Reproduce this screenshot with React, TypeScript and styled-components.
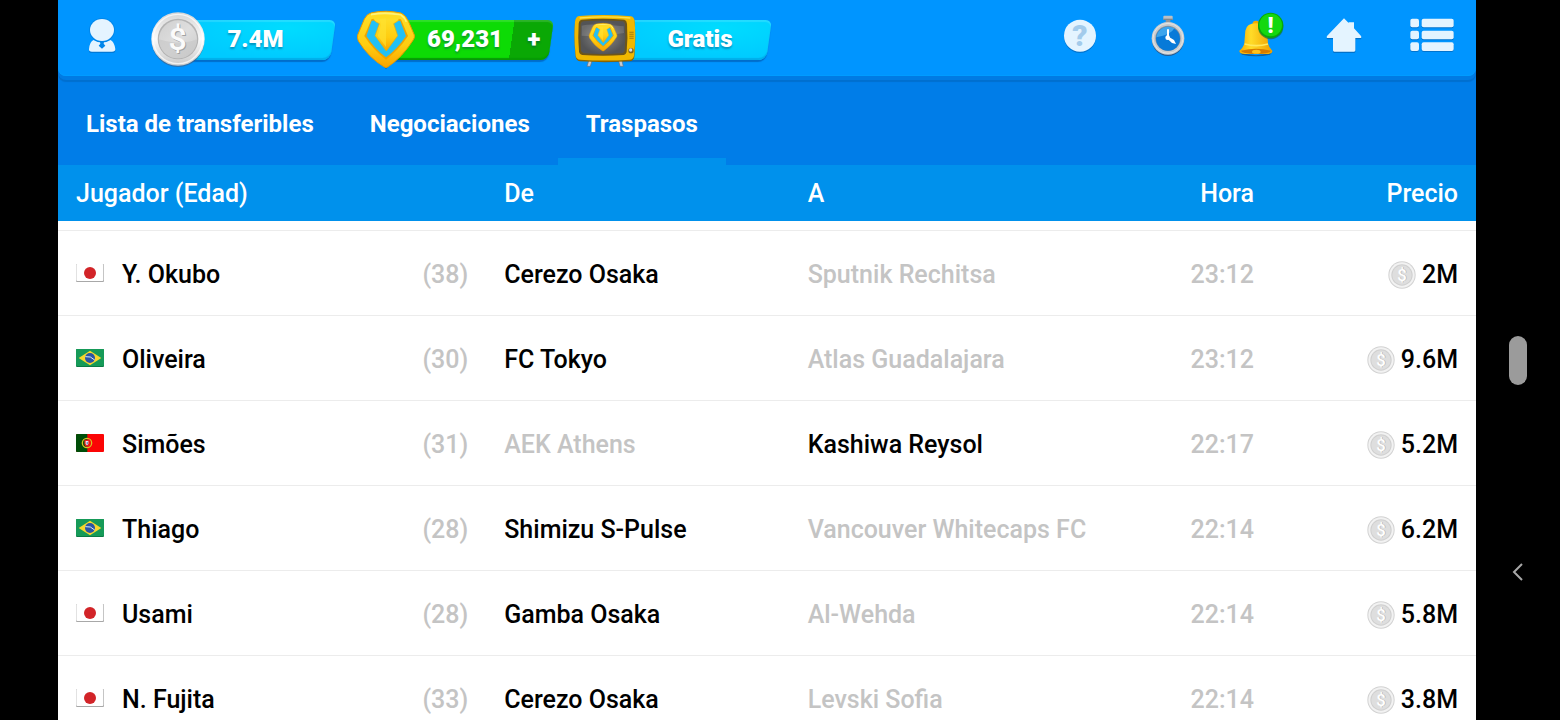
import React from "react";
import styled, { createGlobalStyle } from "styled-components";

const GlobalStyle = createGlobalStyle`
  *, *::before, *::after { box-sizing: border-box; }
  body {
    margin: 0;
    background: #000;
    font-family: Roboto, "Liberation Sans", sans-serif;
  }
  button {
    margin: 0;
    padding: 0;
    border: 0;
    background: none;
    color: inherit;
    font: inherit;
    cursor: pointer;
  }
  svg { display: block; flex: none; }
`;

const Device = styled.div`
  display: grid;
  grid-template-columns: 58px minmax(0, 1fr) 84px;
  height: 100vh;
  overflow: hidden;
  background: #000;
`;

const Screen = styled.div`
  grid-column: 2;
  display: flex;
  flex-direction: column;
  min-height: 0;
  overflow: hidden;
  background: #fff;
`;

const HeaderBack = styled.div`
  flex: none;
  background: #007de8;
`;

const Header = styled.header`
  display: flex;
  justify-content: space-between;
  height: 76px;
  border-radius: 0 0 8px 8px;
  background: #0095ff;
  box-shadow: inset 0 -1px 0 #009cff, 0 4px 0 #007be3, 0 6px 1px #006fcf;
`;

const HeaderGroup = styled.div`
  display: flex;
`;

const IconButton = styled.button`
  display: flex;
  align-items: center;
  justify-content: center;
  width: 88px;
  height: 72px;
`;

const Resources = styled.div`
  display: flex;
  gap: 20px;
  padding: 20px 3px 16px;
`;

const Resource = styled.button<{ $width: number }>`
  display: flex;
  align-items: center;
  width: ${(p) => p.$width}px;
  height: 40px;
`;

const ResourceIcon = styled.span`
  position: relative;
  z-index: 1;
  margin-right: -32px;
`;

const Pill = styled.span<{ $tone: "cyan" | "green"; $inset: number }>`
  position: relative;
  display: flex;
  flex: 1;
  align-items: center;
  height: 40px;
  padding-left: ${(p) => p.$inset}px;
  color: #fff;
  font-size: 24px;
  font-weight: 900;
  line-height: 38px;
  text-shadow: 0 2px 2px rgba(0, 60, 100, 0.4);

  &::before {
    content: "";
    position: absolute;
    inset: 0 3px 0 3px;
    border-radius: 5px 6px 8px 5px;
    transform: skewX(-8deg);
    background: ${(p) =>
      p.$tone === "cyan"
        ? "radial-gradient(ellipse at 70% 20%, #00dcff, #00caff 70%)"
        : "linear-gradient(90deg, #0ddb05 0 76%, #0aa805 76%)"};
    box-shadow: inset 0 2px 1px rgba(255, 255, 255, 0.14),
      inset 0 -2px 1px ${(p) => (p.$tone === "cyan" ? "#00aeea" : "#079a06")},
      0 2px 1px rgba(0, 60, 140, 0.45);
  }
`;

const Amount = styled.span`
  position: relative;
  flex: 1;
  height: 40px;
  text-align: center;
`;

const Plus = styled.span`
  position: relative;
  width: 40px;
  height: 40px;
  text-align: center;
`;

const Tabs = styled.nav`
  display: flex;
  padding-top: 6px;
`;

const Tab = styled.button<{ $active?: boolean }>`
  height: 83px;
  padding: 8px 28px 0;
  border-bottom: 7px solid ${(p) => (p.$active ? "#0091ec" : "transparent")};
  color: #fff;
  font-size: 24px;
  font-weight: 700;
  line-height: 32px;
  white-space: nowrap;
`;

const Table = styled.table`
  width: 100%;
  border-collapse: separate;
  border-spacing: 0;
  table-layout: fixed;
  font-size: 25px;
  font-weight: 500;
  line-height: 32px;
`;

const Col = styled.col<{ $width?: string }>`
  width: ${(p) => p.$width ?? "auto"};
`;

const HeadCell = styled.th<{ $end?: boolean }>`
  height: 56px;
  padding: 2px 18px 0;
  background: #0091ec;
  color: #fff;
  font-weight: 500;
  text-align: ${(p) => (p.$end ? "right" : "left")};
`;

const ScrolledCell = styled.td`
  height: 10px;
  padding: 0;
  border-bottom: 1px solid #ececec;
`;

const Cell = styled.td<{ $muted?: boolean; $end?: boolean }>`
  height: 85px;
  padding: 4px 18px 0;
  border-bottom: 1px solid #ececec;
  color: ${(p) => (p.$muted ? "#c4c4c4" : "#000")};
  text-align: ${(p) => (p.$end ? "right" : "left")};
  white-space: nowrap;
`;

const Player = styled.div`
  display: flex;
  align-items: center;
  gap: 18px;
`;

const FlagBox = styled.span`
  padding-bottom: 4px;
`;

const Age = styled.span`
  margin-left: auto;
  color: #c4c4c4;
`;

const Price = styled.div`
  display: flex;
  align-items: center;
  justify-content: flex-end;
  gap: 6px;
`;

const SystemBar = styled.aside`
  grid-column: 3;
  display: grid;
  grid-template-rows: 1fr 49px 1fr;
  justify-items: center;
`;

const HomeHandle = styled.button`
  grid-row: 2;
  width: 18px;
  border-radius: 9px;
  background: #9b9b9b;
`;

const BackButton = styled.button`
  grid-row: 3;
  display: flex;
  align-items: center;
  justify-content: center;
  width: 48px;
  padding-top: 40px;
`;

function PersonIcon() {
  return (
    <svg width="32" height="38" viewBox="84 48 96 114" aria-hidden="true">
      <g transform="translate(0 4)" fill="#0067bd" opacity=".6">
        <ellipse cx="132" cy="87" rx="36" ry="32" />
        <path d="M106 117Q132 132 158 117Q170 124 172 145Q172 152 162 152H102Q92 152 93 145Q94 124 106 117Z" />
      </g>
      <g fill="#e5f4ff">
        <path d="M106 117Q132 132 158 117Q170 124 172 145Q172 152 162 152H102Q92 152 93 145Q94 124 106 117Z" />
        <ellipse cx="132" cy="87" rx="39" ry="36" fill="#0086ea" />
        <ellipse cx="132" cy="87" rx="36" ry="33" />
      </g>
      <path d="M126 122h12l-1 6 5 6-10 9-10-9 5-6z" fill="#0086ea" />
    </svg>
  );
}

function CoinIcon() {
  return (
    <svg width="58" height="58" viewBox="273 33 174 174" aria-hidden="true">
      <defs>
        <linearGradient id="coinRim" x1="0" y1="0" x2="0" y2="1">
          <stop offset="0" stopColor="#d6d6d6" />
          <stop offset=".5" stopColor="#fafafa" />
          <stop offset="1" stopColor="#c9c9c9" />
        </linearGradient>
        <linearGradient id="coinFace" x1="0" y1="0" x2="1" y2="1">
          <stop offset="0" stopColor="#cfcfcf" />
          <stop offset=".5" stopColor="#dedede" />
          <stop offset="1" stopColor="#cccccc" />
        </linearGradient>
      </defs>
      <circle cx="360" cy="122" r="79" fill="#4b5a78" opacity=".6" />
      <circle cx="360" cy="117" r="80" fill="url(#coinRim)" />
      <circle cx="360" cy="117" r="74" fill="none" stroke="#fff" strokeWidth="4" opacity=".7" />
      <circle cx="360" cy="117" r="61" fill="#b4b4b4" />
      <circle cx="360" cy="118" r="57" fill="url(#coinFace)" />
      <path d="M303 118a57 57 0 0 0 114 0q-50 20-114 0z" fill="#c6c6c6" opacity=".6" />
      <g fontFamily="Roboto, sans-serif" fontSize="96" fontWeight="500" textAnchor="middle">
        <text x="362" y="152" fill="#a2a2a2">$</text>
        <text x="359" y="149" fill="#fbfbfb">$</text>
      </g>
    </svg>
  );
}

function SmallCoinIcon() {
  return (
    <svg width="28" height="28" viewBox="0 0 84 84" aria-hidden="true">
      <circle cx="42" cy="42" r="41" fill="#d2d2d2" />
      <circle cx="42" cy="42" r="38" fill="#f2f2f2" />
      <circle cx="42" cy="42" r="32" fill="#d0d0d0" />
      <circle cx="42" cy="42" r="29" fill="#dedede" />
      <g fontFamily="Roboto, sans-serif" fontSize="50" fontWeight="500" textAnchor="middle">
        <text x="44" y="60" fill="#b5b5b5">$</text>
        <text x="42" y="59" fill="#fff">$</text>
      </g>
    </svg>
  );
}

function ShieldShape() {
  return (
    <g>
      <path
        d="M84 37Q127 28 172 38Q186 44 194 62L212 104Q214 112 208 120Q175 172 132 200Q127 203 122 200Q75 172 44 122Q40 112 42 104L62 56Q70 40 84 37Z"
        fill="url(#gold)"
        stroke="#e89a00"
        strokeWidth="3"
      />
      <path d="M82 43Q127 35 172 44Q184 52 188 64" fill="none" stroke="#fff27a" strokeWidth="5" />
      <path d="M84 56Q127 50 172 57L193 107Q166 148 127 178Q88 148 62 107Z" fill="#f0a400" />
      <path d="M84 61Q127 55 170 62L187 107Q162 145 127 171Q92 145 68 107Z" fill="#22c0f5" />
      <path d="M88 50L168 50Q168 62 150 70L162 106L128 152L94 106L107 70Q88 62 88 50Z" fill="url(#gold)" stroke="#efac00" strokeWidth="2" />
      <path d="M84 46Q127 40 171 46V55H84Z" fill="#ffdc22" />
      <path d="M108 56L112 74L102 106L127 140V54Z" fill="#ffe232" opacity=".6" />
    </g>
  );
}

function GoldGradient() {
  return (
    <linearGradient id="gold" x1="0" y1="0" x2="0" y2="1">
      <stop offset="0" stopColor="#ffe02a" />
      <stop offset=".6" stopColor="#ffcd10" />
      <stop offset="1" stopColor="#f8a400" />
    </linearGradient>
  );
}

function ShieldIcon() {
  return (
    <svg width="60" height="60" viewBox="37 29 180 180" aria-hidden="true">
      <defs>
        <GoldGradient />
      </defs>
      <path d="M44 118L127 207L210 118Z" fill="#004a90" opacity=".45" />
      <ShieldShape />
    </svg>
  );
}

function TvIcon() {
  return (
    <svg width="62" height="56" viewBox="41 35 186 168" aria-hidden="true">
      <defs>
        <radialGradient id="tvGlass">
          <stop offset="0" stopColor="#8a8a88" />
          <stop offset="1" stopColor="#535456" />
        </radialGradient>
      </defs>
      <path d="M86 178l-6 20h10l6-20zM174 178l5 20h10l-5-20z" fill="#c4cad2" stroke="#66707c" strokeWidth="2" />
      <path d="M56 50Q134 40 212 50Q222 52 223 66Q227 118 222 170Q220 182 208 183Q134 188 60 183Q48 182 46 170Q40 118 44 66Q46 52 56 50Z" fill="#8c6400" />
      <path d="M56 47Q134 41 212 48Q222 50 223 64Q227 114 221 166Q219 177 208 178Q134 183 60 178Q48 177 46 166Q40 114 44 64Q46 49 56 47Z" fill="#f0b800" />
      <path d="M58 53Q134 46 210 53" fill="none" stroke="#ffe04a" strokeWidth="4" />
      <path d="M64 58Q128 53 192 58Q199 60 200 70Q203 112 199 153Q198 163 190 164Q128 169 66 164Q57 163 56 153Q52 112 55 70Q56 59 64 58Z" fill="#6d5518" />
      <path d="M68 63Q128 58 188 63Q193 64 194 72Q197 112 193 150Q192 158 186 159Q128 164 70 159Q63 158 62 150Q58 112 61 72Q62 64 68 63Z" fill="url(#tvGlass)" />
      <path d="M64 76Q90 68 190 78L191 98Q120 110 64 106Z" fill="#fff" opacity=".14" />
      <g transform="translate(66 53) scale(.49)">
        <ShieldShape />
      </g>
      <g fill="#a77c08">
        <path d="M207 94h13v3h-13zM207 100h13v3h-13zM207 106h13v3h-13zM207 112h13v3h-13z" />
      </g>
      <circle cx="212" cy="151" r="8" fill="#7a6324" />
      <circle cx="211" cy="149" r="5" fill="#d9dce0" />
    </svg>
  );
}

function HelpIcon() {
  return (
    <svg width="34" height="36" viewBox="69 55 102 108" aria-hidden="true">
      <circle cx="120" cy="112" r="48" fill="#0065bb" opacity=".7" />
      <circle cx="120" cy="108" r="48" fill="#e4f4ff" />
      <text x="120" y="140" fill="#a3cbeb" fontFamily="Roboto, sans-serif" fontSize="90" fontWeight="900" textAnchor="middle">?</text>
    </svg>
  );
}

function StopwatchIcon() {
  return (
    <svg width="36" height="42" viewBox="332 45 108 126" aria-hidden="true">
      <circle cx="386" cy="120" r="48" fill="#304c74" opacity=".8" />
      <path d="M379 58h14v14h-14z" fill="#8f959b" />
      <rect x="372" y="47" width="28" height="13" rx="3" fill="#b9bfc4" />
      <path d="M372 56h28v4h-28z" fill="#7f878e" />
      <circle cx="386" cy="115" r="49" fill="#c9cccf" />
      <circle cx="386" cy="115" r="45" fill="none" stroke="#e4e4e4" strokeWidth="3" />
      <circle cx="386" cy="115" r="38" fill="#8b949e" />
      <circle cx="386" cy="116" r="36" fill="#087ad8" />
      <path d="M351 112A36 36 0 0 1 405 85Q395 105 351 112Z" fill="#4fb4f4" opacity=".75" />
      <path d="M383 88h6v22h-6zM388 110l16 10 6 12-12-3-13-12z" fill="#fff" />
      <circle cx="385" cy="113" r="7" fill="#fff" />
    </svg>
  );
}

function BellIcon() {
  return (
    <svg width="56" height="50" viewBox="564 33 168 150" aria-hidden="true">
      <defs>
        <linearGradient id="bellBody">
          <stop offset="0" stopColor="#f5aa00" />
          <stop offset=".35" stopColor="#ffdc28" />
          <stop offset="1" stopColor="#f0a000" />
        </linearGradient>
      </defs>
      <path d="M598 155Q648 176 698 155L690 164Q648 174 606 164Z" fill="#174a78" opacity=".7" />
      <ellipse cx="648" cy="70" rx="10" ry="8" fill="#efab00" />
      <path d="M616 92Q620 70 648 70Q678 70 681 96L684 130Q686 142 697 152Q699 162 680 162H616Q597 162 598 152Q611 142 613 128Z" fill="url(#bellBody)" />
      <path d="M614 132Q648 142 684 132" fill="none" stroke="#ffe95e" strokeWidth="5" />
      <path d="M603 152Q648 140 693 152Q692 161 648 162Q604 161 603 152Z" fill="#d77b00" />
      <ellipse cx="649" cy="155" rx="13" ry="6" fill="#ffc21a" />
      <circle cx="692" cy="80" r="38" fill="#1b6840" opacity=".7" />
      <circle cx="692" cy="76" r="38" fill="#08a80a" />
      <circle cx="692" cy="75" r="34" fill="#14d80f" />
      <text x="692" y="98" fill="#fff" fontFamily="Roboto, sans-serif" fontSize="66" fontWeight="900" textAnchor="middle">!</text>
    </svg>
  );
}

function HomeIcon() {
  const house = "M132 54L146 68V66H162V84L183 107Q186 113 180 113H166V150Q166 154 162 154H103Q99 154 99 150V113H84Q78 113 81 107Z";
  return (
    <svg width="36" height="38" viewBox="78 50 108 114" aria-hidden="true">
      <path d={house} transform="translate(0 4)" fill="#0065b8" opacity=".75" />
      <path d={house} fill="#e4f4ff" />
    </svg>
  );
}

function MenuIcon() {
  return (
    <svg width="46" height="38" viewBox="326 50 138 114" aria-hidden="true">
      {[55, 91, 126].map((y) => (
        <g key={y}>
          <rect x="330" y={y + 3} width="26" height="26" rx="6" fill="#0068bd" opacity=".75" />
          <rect x="364" y={y + 3} width="96" height="26" rx="6" fill="#0068bd" opacity=".75" />
          <rect x="330" y={y} width="26" height="26" rx="6" fill="#e4f4ff" />
          <rect x="364" y={y} width="96" height="26" rx="6" fill="#e4f4ff" />
        </g>
      ))}
    </svg>
  );
}

type Country = "Japón" | "Brasil" | "Portugal";

function Flag({ country }: { country: Country }) {
  return (
    <svg width="28" height="18" viewBox="0 0 84 54" role="img" aria-label={country}>
      {country === "Japón" && (
        <>
          <rect width="84" height="54" rx="3" fill="#a8a8a8" />
          <rect x="1" width="81" height="51" rx="3" fill="#fff" />
          <circle cx="42" cy="27" r="18" fill="#d22428" />
        </>
      )}
      {country === "Brasil" && (
        <>
          <rect width="84" height="54" rx="3" fill="#0b7a45" />
          <rect width="84" height="51" rx="3" fill="#169a58" />
          <path d="M8 27L42 5L76 27L42 49Z" fill="#f8d62c" />
          <circle cx="42" cy="27" r="15" fill="#2b54a4" />
          <path d="M28 23Q44 20 56 33" fill="none" stroke="#dfeaf5" strokeWidth="3" />
        </>
      )}
      {country === "Portugal" && (
        <>
          <rect width="84" height="54" rx="3" fill="#fb0505" />
          <path d="M3 0H34V54H3Q0 54 0 51V3Q0 0 3 0Z" fill="#004d08" />
          <circle cx="33" cy="27" r="14" fill="none" stroke="#d8c224" strokeWidth="4" />
          <path d="M25 17H41V30Q40 37 33 39Q26 37 25 30Z" fill="#e02020" />
          <path d="M29 21H37V30L33 34L29 30Z" fill="#fff" />
          <path d="M32 23h3v8h-3z" fill="#3558a8" />
        </>
      )}
    </svg>
  );
}

interface Transfer {
  country: Country;
  name: string;
  age: number;
  from: string;
  to: string;
  own: "from" | "to";
  time: string;
  price: string;
}

const transfers: Transfer[] = [
  { country: "Japón", name: "Y. Okubo", age: 38, from: "Cerezo Osaka", to: "Sputnik Rechitsa", own: "from", time: "23:12", price: "2M" },
  { country: "Brasil", name: "Oliveira", age: 30, from: "FC Tokyo", to: "Atlas Guadalajara", own: "from", time: "23:12", price: "9.6M" },
  { country: "Portugal", name: "Simões", age: 31, from: "AEK Athens", to: "Kashiwa Reysol", own: "to", time: "22:17", price: "5.2M" },
  { country: "Brasil", name: "Thiago", age: 28, from: "Shimizu S-Pulse", to: "Vancouver Whitecaps FC", own: "from", time: "22:14", price: "6.2M" },
  { country: "Japón", name: "Usami", age: 28, from: "Gamba Osaka", to: "Al-Wehda", own: "from", time: "22:14", price: "5.8M" },
  { country: "Japón", name: "N. Fujita", age: 33, from: "Cerezo Osaka", to: "Levski Sofia", own: "from", time: "22:14", price: "3.8M" },
];

export default function App() {
  return (
    <>
      <GlobalStyle />
      <Device>
        <Screen>
          <HeaderBack>
            <Header>
              <HeaderGroup>
                <IconButton aria-label="Perfil"><PersonIcon /></IconButton>
                <Resources>
                  <Resource $width={187}>
                    <ResourceIcon><CoinIcon /></ResourceIcon>
                    <Pill $tone="cyan" $inset={0}><Amount>7.4M</Amount></Pill>
                  </Resource>
                  <Resource $width={198}>
                    <ResourceIcon><ShieldIcon /></ResourceIcon>
                    <Pill $tone="green" $inset={32}><Amount>69,231</Amount><Plus>+</Plus></Pill>
                  </Resource>
                  <Resource $width={198}>
                    <ResourceIcon><TvIcon /></ResourceIcon>
                    <Pill $tone="cyan" $inset={24}><Amount>Gratis</Amount></Pill>
                  </Resource>
                </Resources>
              </HeaderGroup>
              <HeaderGroup>
                <IconButton aria-label="Ayuda"><HelpIcon /></IconButton>
                <IconButton aria-label="Temporizador"><StopwatchIcon /></IconButton>
                <IconButton aria-label="Notificaciones"><BellIcon /></IconButton>
                <IconButton aria-label="Inicio"><HomeIcon /></IconButton>
                <IconButton aria-label="Menú"><MenuIcon /></IconButton>
              </HeaderGroup>
            </Header>
            <Tabs>
              <Tab>Lista de transferibles</Tab>
              <Tab>Negociaciones</Tab>
              <Tab $active aria-current="page">Traspasos</Tab>
            </Tabs>
          </HeaderBack>
          <Table>
            <colgroup>
              <Col $width="30.2%" />
              <Col $width="21.4%" />
              <Col />
              <Col $width="140px" />
              <Col $width="204px" />
            </colgroup>
            <thead>
              <tr>
                <HeadCell scope="col">Jugador (Edad)</HeadCell>
                <HeadCell scope="col">De</HeadCell>
                <HeadCell scope="col">A</HeadCell>
                <HeadCell scope="col" $end>Hora</HeadCell>
                <HeadCell scope="col" $end>Precio</HeadCell>
              </tr>
            </thead>
            <tbody>
              <tr aria-hidden="true">
                <ScrolledCell colSpan={5} />
              </tr>
              {transfers.map((t) => (
                <tr key={t.name}>
                  <Cell>
                    <Player>
                      <FlagBox><Flag country={t.country} /></FlagBox>
                      <span>{t.name}</span>
                      <Age>({t.age})</Age>
                    </Player>
                  </Cell>
                  <Cell $muted={t.own !== "from"}>{t.from}</Cell>
                  <Cell $muted={t.own !== "to"}>{t.to}</Cell>
                  <Cell $muted $end>{t.time}</Cell>
                  <Cell $end>
                    <Price><SmallCoinIcon />{t.price}</Price>
                  </Cell>
                </tr>
              ))}
            </tbody>
          </Table>
        </Screen>
        <SystemBar>
          <HomeHandle aria-label="Pantalla de inicio" />
          <BackButton aria-label="Atrás">
            <svg width="12" height="20" viewBox="0 0 12 20" aria-hidden="true">
              <path d="M10 2L2 10L10 18" fill="none" stroke="#a8a8a8" strokeWidth="2" />
            </svg>
          </BackButton>
        </SystemBar>
      </Device>
    </>
  );
}
